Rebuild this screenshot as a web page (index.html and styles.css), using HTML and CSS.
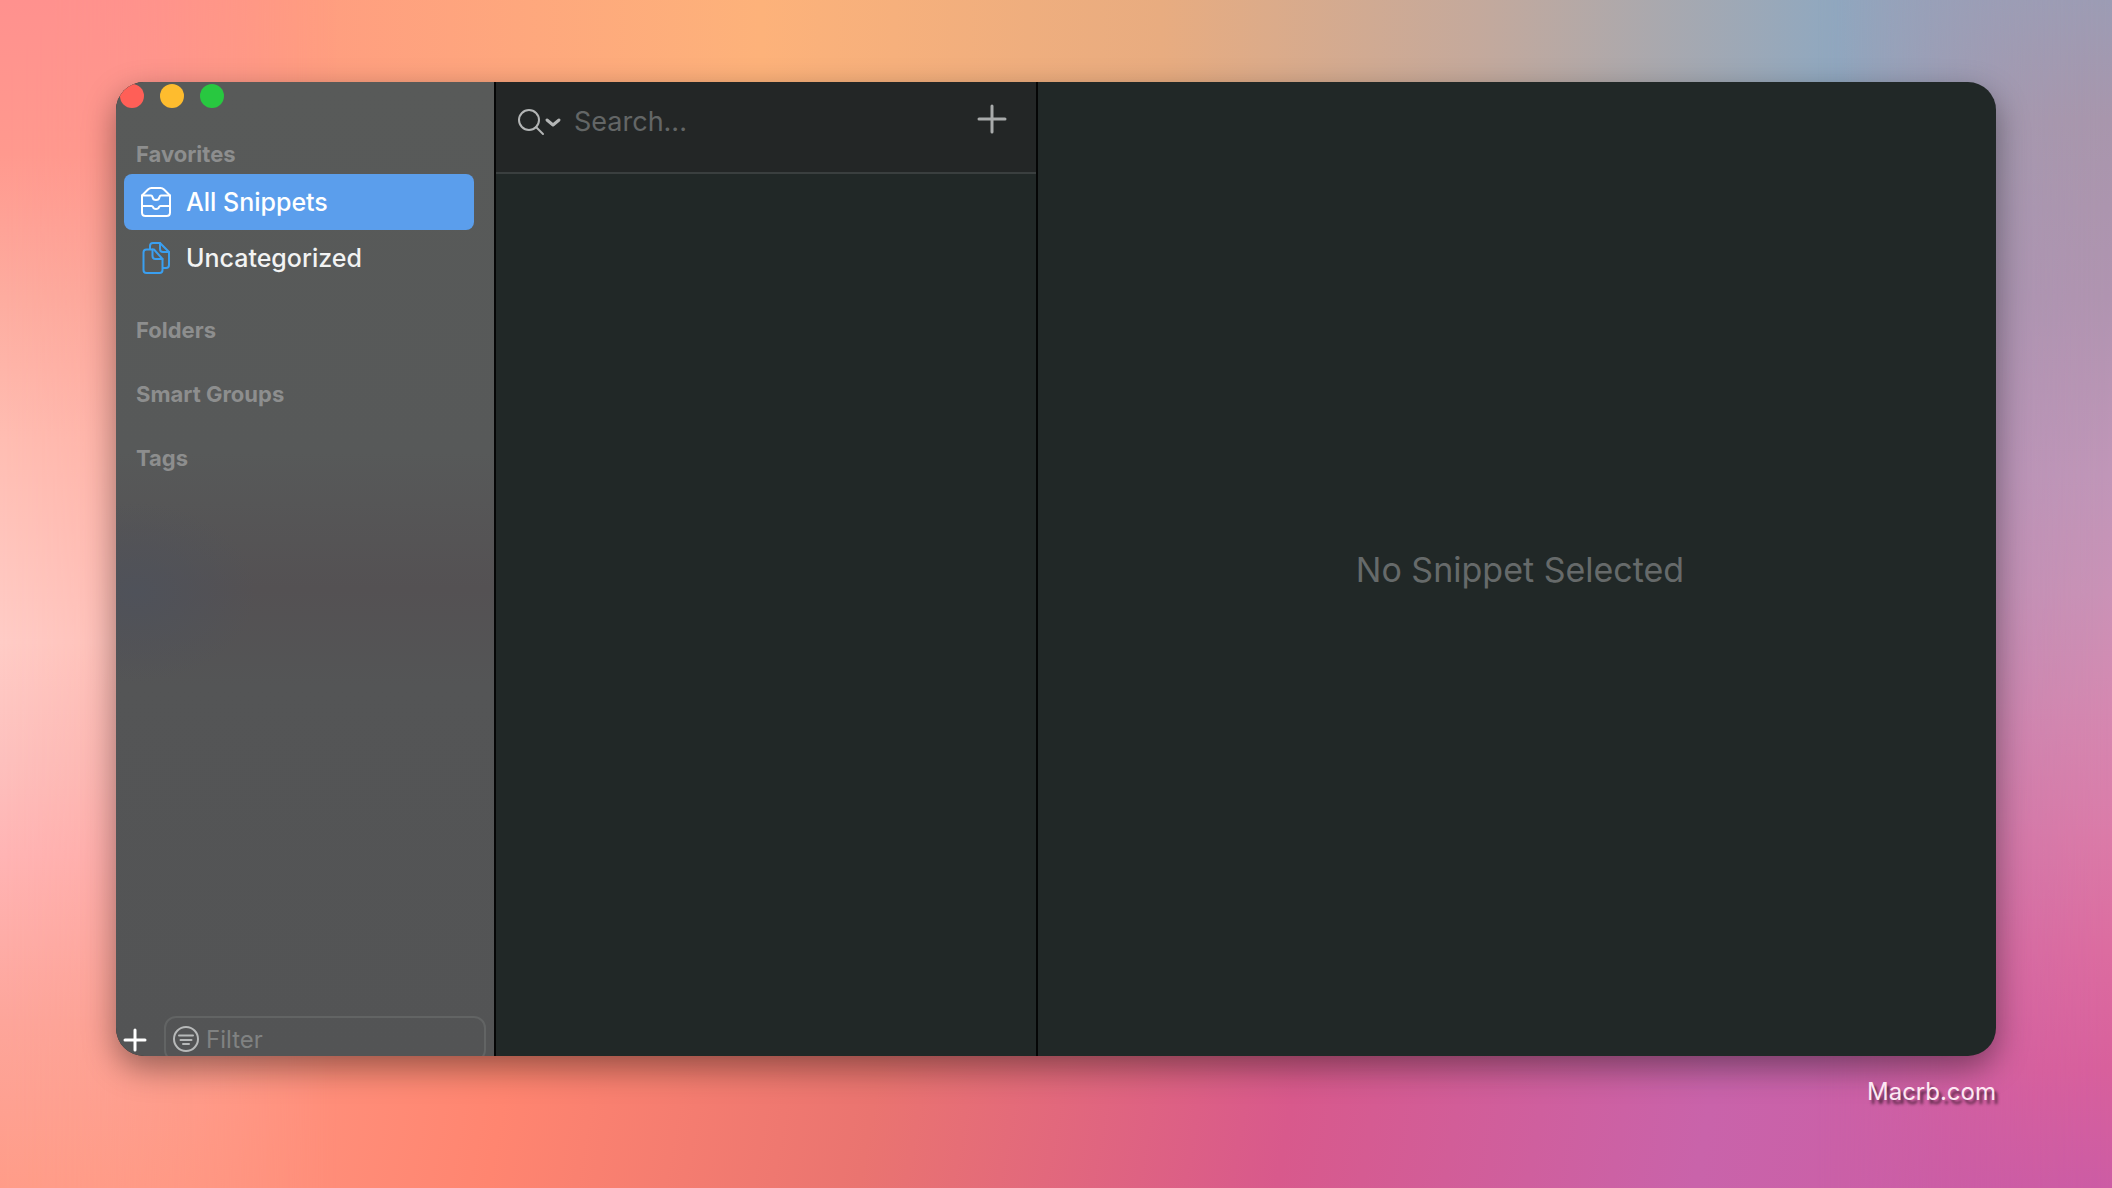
FILE: index.html
```html
<!DOCTYPE html>
<html lang="en">
<head>
<meta charset="utf-8">
<title>Snippets</title>
<link rel="stylesheet" href="styles.css">
</head>
<body>
<main class="window">
  <aside class="sidebar">
    <div class="lights">
      <button class="light close" aria-label="Close"></button>
      <button class="light minimize" aria-label="Minimize"></button>
      <button class="light maximize" aria-label="Maximize"></button>
    </div>
    <nav class="groups">
      <section>
        <h2 class="group-title">Favorites</h2>
        <a class="item selected" href="#all">
          <svg class="item-icon" viewBox="0 0 32 32" aria-hidden="true">
            <path d="M2 9.500 8 3.500Q9.500 2 11.500 2H20.500Q22.500 2 24 3.500L30 9.500V26.500Q30 30 26.500 30H5.500Q2 30 2 26.500Z"/>
            <path d="M2 9.500H11Q12 9.500 12.500 11Q13 14 16 14Q19 14 19.500 11Q20 9.500 21 9.500H30"/>
            <path d="M2 20H11.500Q12.500 20 13 21Q13.500 23 16 23Q18.500 23 19 21Q19.500 20 20.500 20H30"/>
          </svg>
          <span>All Snippets</span>
        </a>
        <a class="item" href="#uncategorized">
          <svg class="item-icon blue" viewBox="0 0 32 32" aria-hidden="true">
            <path d="M10 7V4Q10 1 13 1H20L29 10V23Q29 26 26 26H23"/>
            <path d="M20 1V7Q20 10 23 10H29"/>
            <path d="M14 7.500H6.500Q3.500 7.500 3.500 10.500V28Q3.500 31 6.500 31H19.500Q22.500 31 22.500 28V17Z"/>
            <path d="M12.500 7.500V14Q12.500 17 15.500 17H22.500"/>
          </svg>
          <span>Uncategorized</span>
        </a>
      </section>
      <section><h2 class="group-title">Folders</h2></section>
      <section><h2 class="group-title">Smart Groups</h2></section>
      <section><h2 class="group-title">Tags</h2></section>
    </nav>
    <div class="sidebar-footer">
      <button class="icon-button add-group" aria-label="Add group">
        <svg viewBox="0 0 22 22" aria-hidden="true"><path d="M11 1V21M1 11H21"/></svg>
      </button>
      <label class="filter">
        <svg viewBox="0 0 28 28" aria-hidden="true">
          <circle cx="14" cy="14" r="12"/>
          <path d="M7 10.500H21M8.500 15H19.500M11 19H17"/>
        </svg>
        <input type="text" placeholder="Filter" aria-label="Filter">
      </label>
    </div>
  </aside>
  <section class="list">
    <header class="list-header">
      <label class="search">
        <svg viewBox="0 0 44 30" aria-hidden="true">
          <circle cx="13" cy="13" r="10"/>
          <path d="M20 20 27 27"/>
          <path class="chevron" d="M31 13 37 18 43 13"/>
        </svg>
        <input type="search" placeholder="Search..." aria-label="Search">
      </label>
      <button class="icon-button add-snippet" aria-label="New snippet">
        <svg viewBox="0 0 28 28" aria-hidden="true"><path d="M14 1V27M1 14H27"/></svg>
      </button>
    </header>
  </section>
  <section class="detail"><p>No Snippet Selected</p></section>
</main>
<footer class="credit">Macrb.com</footer>
</body>
</html>
```

FILE: styles.css
```css
* { box-sizing: border-box; }

body {
  margin: 0;
  min-height: 100vh;
  padding: 82px 116px 0;
  display: flex;
  flex-direction: column;
  position: relative;
  isolation: isolate;
  font-family: Inter, "Liberation Sans", sans-serif;
  background: linear-gradient(90deg, #ff908f 0%, #ff9d80 14%, #fdb27a 36%, #e8ac80 55%, #c4a99c 70%, #8fa8c0 87%, #a39bb4 100%);
}

body::before,
body::after {
  content: "";
  position: absolute;
  inset: 0;
}

/* lower half of the wallpaper, faded in over the upper one */
body::before {
  z-index: -2;
  background: linear-gradient(100deg, #ff9c88 0%, #ff9a86 12%, #ff8570 30%, #ea7470 46%, #d8598c 64%, #c963aa 82%, #cc5ca4 100%);
  -webkit-mask-image: linear-gradient(#0000 10%, #0006 55%, #000 92%);
  mask-image: linear-gradient(#0000 10%, #0006 55%, #000 92%);
}

/* left and right sides, faded out towards the middle */
body::after {
  z-index: -1;
  background:
    linear-gradient(#ff918e 0%, #ff998e 13%, #fdac9f 25%, #ffbdb2 37%, #ffccc6 54%, #fdc0bd 64%, #ffb4b4 72%, #fda59a 86%, #ff9c88 100%) left / 50% 100% no-repeat,
    linear-gradient(#9c9cb4 0%, #a896ac 10%, #b094b0 25%, #c096b8 40%, #ca92b6 50%, #d588b0 60%, #db7ba8 70%, #dc6ca0 80%, #d8609c 90%, #cc5ca4 100%) right / 50% 100% no-repeat;
  -webkit-mask-image: linear-gradient(90deg, #000 0%, #000c 5%, #0000 16%, #0000 86%, #000c 96%, #000 100%);
  mask-image: linear-gradient(90deg, #000 0%, #000c 5%, #0000 16%, #0000 86%, #000c 96%, #000 100%);
}

button, input { font: inherit; border: 0; padding: 0; background: none; }
h2, p { margin: 0; }
svg {
  display: block;
  overflow: visible;
  fill: none;
  stroke: currentColor;
  stroke-width: 2;
  stroke-linecap: round;
  stroke-linejoin: round;
}

.window {
  flex: 1;
  display: grid;
  grid-template-columns: 380px 542px 1fr;
  border-radius: 28px;
  overflow: hidden;
  background: #212827;
  box-shadow: 0 12px 32px #0006;
}

.sidebar {
  display: flex;
  flex-direction: column;
  min-width: 0;
  border-right: 2px solid #050606;
  background:
    radial-gradient(ellipse 120px 90px at 20px 510px, #4f525a 0%, #4f525a00 100%),
    linear-gradient(#585a59 0%, #575959 38%, #545153 52%, #545556 62%, #535455 100%);
}

.lights { display: flex; gap: 16px; padding: 2px 4px 0; }
.light { width: 24px; height: 24px; border-radius: 50%; }
.close { background: #ff5f57; }
.minimize { background: #febc2e; }
.maximize { background: #28c840; }

.groups {
  flex: 1;
  display: flex;
  flex-direction: column;
  gap: 24px;
  padding: 26px 20px 0 8px;
}
.group-title {
  padding: 0 12px;
  font-size: 22px;
  line-height: 40px;
  font-weight: 700;
  color: #8d8e8e;
}
.item {
  display: flex;
  align-items: center;
  gap: 14px;
  height: 56px;
  padding: 0 16px;
  border-radius: 8px;
  font-size: 25px;
  line-height: 32px;
  font-weight: 500;
  color: #f2f3f3;
  text-decoration: none;
}
.selected { background: #5b9eec; color: #fff; }
.item-icon { width: 32px; height: 32px; }
.blue { color: #3a9ff0; }

.sidebar-footer {
  display: flex;
  align-items: flex-start;
  gap: 18px;
  height: 40px;
  padding: 0 8px;
  overflow: hidden;
}
.icon-button { flex: none; }
.add-group { margin-top: 13px; color: #fff; }
.add-group svg { width: 22px; height: 22px; stroke-width: 3; }
.filter {
  flex: 1;
  min-width: 0;
  display: flex;
  align-items: center;
  gap: 6px;
  height: 46px;
  padding: 0 6px;
  border: 2px solid #626464;
  border-radius: 12px;
  font-size: 24px;
  color: #b7b9b9;
}
.filter svg { flex: none; width: 28px; height: 28px; }
input { flex: 1; min-width: 0; color: #fff; outline: 0; }
.filter input::placeholder { color: #808282; opacity: 1; }

.list { min-width: 0; border-right: 2px solid #050606; }
.list-header {
  display: flex;
  align-items: flex-start;
  height: 92px;
  padding: 23px 30px 0 20px;
  background: #232626;
  border-bottom: 2px solid #3a3f3f;
}
.search {
  flex: 1;
  min-width: 0;
  display: flex;
  align-items: center;
  gap: 14px;
  font-size: 27px;
  line-height: 34px;
  color: #b3b5b5;
}
.search svg { flex: none; width: 44px; height: 30px; }
.search .chevron { stroke-width: 3; }
.search input::placeholder { color: #636666; opacity: 1; }
.add-snippet { color: #a9abab; }
.add-snippet svg { width: 28px; height: 28px; stroke-width: 3; }

.detail {
  display: grid;
  place-items: center;
  padding-left: 6px;
  font-size: 34px;
  color: #666a6a;
}

.credit {
  height: 132px;
  padding-top: 20px;
  text-align: right;
  font-size: 24px;
  line-height: 32px;
  color: #fde8f3;
  text-shadow: 3px 4px 3px #0009;
}
```
